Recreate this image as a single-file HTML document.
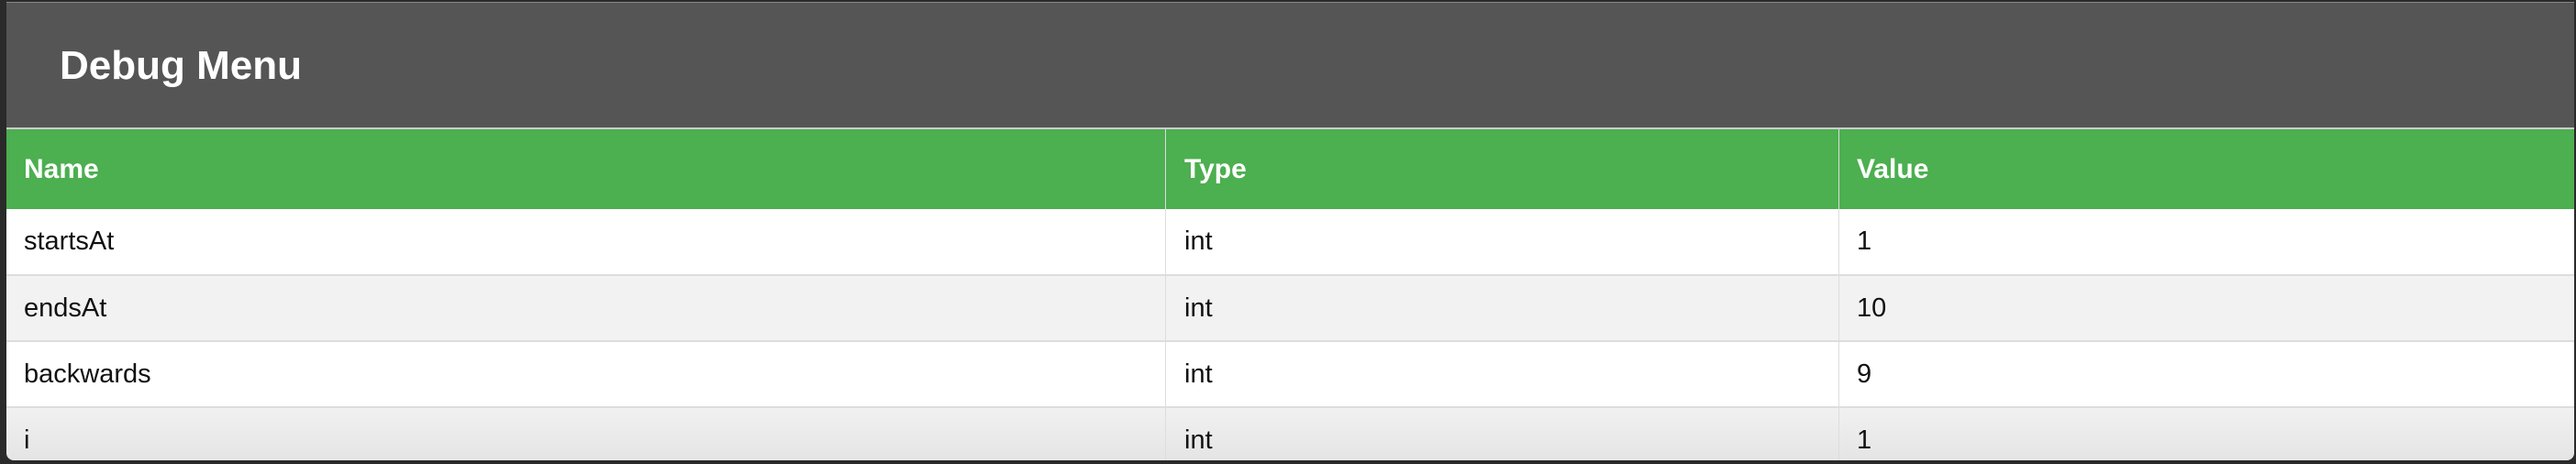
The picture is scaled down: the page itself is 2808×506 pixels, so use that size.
<!DOCTYPE html>
<html><head><style>
*{margin:0;padding:0;box-sizing:border-box}
body{width:2808px;height:506px;background:#2a2a2a;position:relative;overflow:hidden;font-family:"Liberation Sans",sans-serif}
#p{position:absolute;left:7px;top:2px;width:2799px;height:500px;background:#555;border-radius:0 0 8px 8px;overflow:hidden;border-top:1px solid #888}
#t{position:absolute;left:58px;top:44px;color:#fff;font-weight:bold;font-size:44px}
#hl{position:absolute;left:0;top:136px;width:100%;height:2px;background:#ccc}
.r{position:absolute;left:0;width:100%}
.c{position:absolute;top:0;height:100%;font-size:29px;color:#111;display:flex;align-items:center}
.h .c{color:#fff;font-weight:bold;font-size:30px}
.v{position:absolute;top:138px;width:1px;height:362px;background:#ddd}
</style></head><body>
<div id="p">
<div id="t">Debug Menu</div>
<div id="hl"></div>
<div class="r h" style="top:138px;height:87px;background:#4caf50">
<div class="c" style="left:19px">Name</div><div class="c" style="left:1284px">Type</div><div class="c" style="left:2017px">Value</div></div>
<div class="r" style="top:225px;height:71px;background:#fff"><div class="c" style="left:19px">startsAt</div><div class="c" style="left:1284px">int</div><div class="c" style="left:2017px">1</div></div>
<div class="r" style="top:296px;height:2px;background:#ddd"></div>
<div class="r" style="top:298px;height:70px;background:#f2f2f2"><div class="c" style="left:19px">endsAt</div><div class="c" style="left:1284px">int</div><div class="c" style="left:2017px">10</div></div>
<div class="r" style="top:368px;height:2px;background:#ddd"></div>
<div class="r" style="top:370px;height:70px;background:#fff"><div class="c" style="left:19px">backwards</div><div class="c" style="left:1284px">int</div><div class="c" style="left:2017px">9</div></div>
<div class="r" style="top:440px;height:2px;background:#ddd"></div>
<div class="r" style="top:442px;height:60px;background:linear-gradient(#f1f1f1,#e4e4e4)"><div class="c" style="left:19px;height:70px">i</div><div class="c" style="left:1284px;height:70px">int</div><div class="c" style="left:2017px;height:70px">1</div></div>
<div class="v" style="left:1263px"></div>
<div class="v" style="left:1997px"></div>
</div>
</body></html>
